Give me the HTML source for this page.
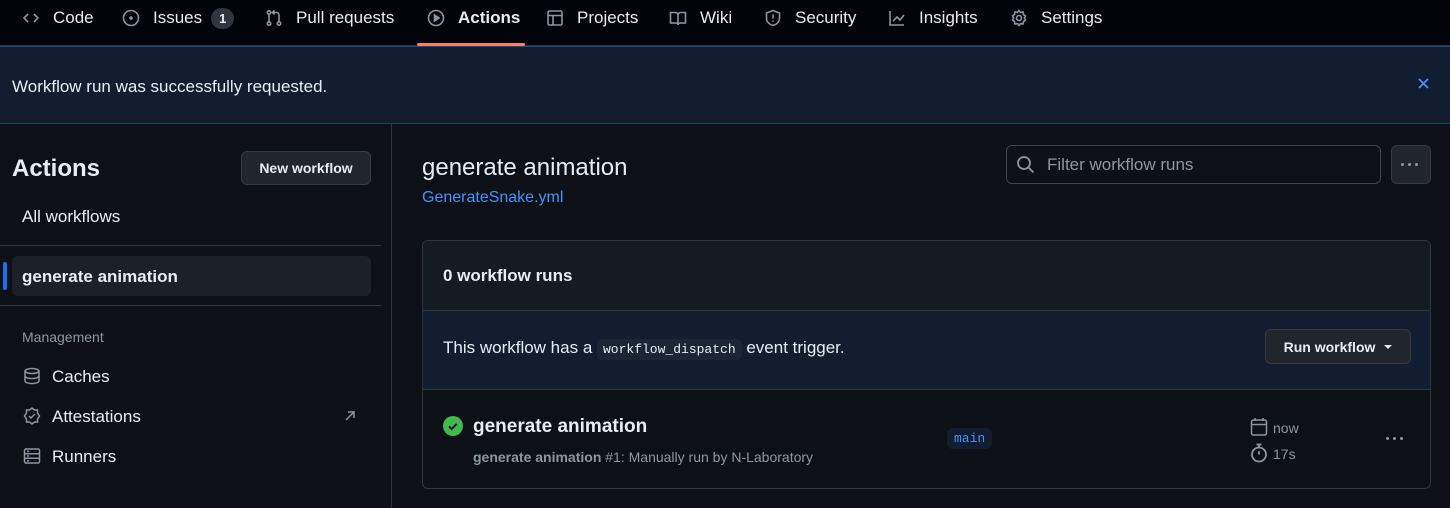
<!DOCTYPE html>
<html><head><meta charset="utf-8"><style>
*{box-sizing:border-box;margin:0;padding:0}
body{width:1450px;height:508px;overflow:hidden;background:#0d1117;color:#e6edf3;font-family:"Liberation Sans",sans-serif;font-size:14px;position:relative}
.nav{position:absolute;left:0;top:0;width:1450px;height:46px;background:#010409;border-bottom:1px solid #30363d}
.nav .it{position:absolute;top:0;height:36px;display:flex;align-items:center;font-size:17px;color:#e6edf3}
.nav svg{width:18px;height:18px;margin-right:13px;fill:none;stroke:#8d96a0;stroke-width:1.6}
.badge{display:inline-block;background:#30363d;border-radius:12px;font-size:13px;padding:3px 8px;margin-left:9px;font-weight:bold}
.flash{position:absolute;left:0;top:46px;width:1450px;height:78px;background:#121d2f;border-top:1px solid #1f4a80;border-bottom:1px solid #1f3a5f}
.side{position:absolute;left:0;top:124px;width:392px;height:384px;border-right:1px solid #30363d}
.btn{position:absolute;background:#21262d;border:1px solid #363b42;border-radius:6px;color:#e6edf3;font-weight:bold;font-size:14px;display:flex;align-items:center;justify-content:center}
.card{position:absolute;left:422px;top:240px;width:1009px;height:249px;border:1px solid #30363d;border-radius:6px;overflow:hidden}
.sicon{fill:none;stroke:#8d96a0;stroke-width:1.5;position:absolute}
.dots{position:absolute;display:flex;gap:4px}
.dots i{display:block;width:3px;height:3px;border-radius:50%;background:#8d96a0}
</style></head><body>
<div class="nav">
 <div class="it" style="left:22px"><svg viewBox="0 0 18 18"><path d="M6 5L2 9l4 4M12 5l4 4-4 4"/></svg>Code</div>
 <div class="it" style="left:122px"><svg viewBox="0 0 18 18"><circle cx="9" cy="9" r="7.5"/><circle cx="9" cy="9" r="1" fill="#8d96a0"/></svg>Issues<span class="badge">1</span></div>
 <div class="it" style="left:265px"><svg viewBox="0 0 18 18"><circle cx="4" cy="3.5" r="1.7"/><circle cx="4" cy="14.5" r="1.7"/><circle cx="14" cy="14.5" r="1.7"/><path d="M4 5.2v7.6M14 12.8V6c0-1.5-1-2.5-2.5-2.5H8M9.5 1.5l-2 2 2 2"/></svg>Pull requests</div>
 <div class="it" style="left:427px;font-weight:bold"><svg viewBox="0 0 18 18"><circle cx="9" cy="9" r="7.5"/><path d="M7.5 6v6l4.5-3z" fill="#8d96a0"/></svg>Actions</div>
 <div style="position:absolute;left:417px;top:43px;width:108px;height:3px;background:#f78166;border-radius:2px"></div>
 <div class="it" style="left:546px"><svg viewBox="0 0 18 18"><rect x="2" y="2" width="14" height="14" rx="1.5"/><path d="M2 6.5h14M7 6.5V16"/></svg>Projects</div>
 <div class="it" style="left:669px"><svg viewBox="0 0 18 18"><path d="M1.5 3.5h5c1.5 0 2.5 1 2.5 2.5v10c0-1-1-2-2.5-2h-5zM16.5 3.5h-5C10 3.5 9 4.5 9 6v10c0-1 1-2 2.5-2h5z"/></svg>Wiki</div>
 <div class="it" style="left:764px"><svg viewBox="0 0 18 18"><path d="M9 1.5l6.5 2.5v5c0 4-3 6.5-6.5 7.5-3.5-1-6.5-3.5-6.5-7.5V4z M9 5.5v4M9 11.5v1.2"/></svg>Security</div>
 <div class="it" style="left:888px"><svg viewBox="0 0 18 18"><path d="M2 2v14h14M5 12l4-4 3 3 4-5"/></svg>Insights</div>
 <div class="it" style="left:1010px"><svg viewBox="0 0 18 18"><circle cx="9" cy="9" r="2.5"/><path d="M9 1.5l1.5 2 2.5-.5.5 2.5 2 1.5-1.2 2 1.2 2-2 1.5-.5 2.5-2.5-.5L9 16.5l-1.5-2-2.5.5-.5-2.5-2-1.5 1.2-2-1.2-2 2-1.5.5-2.5 2.5.5z"/></svg>Settings</div>
</div>
<div class="flash">
 <div style="position:absolute;left:12px;top:30px;font-size:17px">Workflow run was successfully requested.</div>
 <svg style="position:absolute;left:1417px;top:30px" width="13" height="13" viewBox="0 0 13 13"><path d="M2 2l9 9M11 2l-9 9" stroke="#4493f8" stroke-width="1.8"/></svg>
</div>
<div class="side">
 <div style="position:absolute;left:12px;top:31px;font-size:24px;font-weight:bold">Actions</div>
 <div class="btn" style="left:241px;top:27px;width:130px;height:34px">New workflow</div>
 <div style="position:absolute;left:22px;top:83px;font-size:17px">All workflows</div>
 <div style="position:absolute;left:0;top:121px;width:381px;height:1px;background:#30363d"></div>
 <div style="position:absolute;left:12px;top:132px;width:359px;height:40px;background:#1c2128;border-radius:6px"></div>
 <div style="position:absolute;left:3px;top:138px;width:4px;height:28px;background:#1f6feb;border-radius:3px"></div>
 <div style="position:absolute;left:22px;top:143px;font-size:17px;font-weight:bold">generate animation</div>
 <div style="position:absolute;left:0;top:181px;width:381px;height:1px;background:#30363d"></div>
 <div style="position:absolute;left:22px;top:205px;font-size:14px;color:#8d96a0">Management</div>
 <svg class="sicon" style="left:23px;top:243px" width="18" height="18" viewBox="0 0 18 18"><ellipse cx="9" cy="4" rx="7" ry="2.5"/><path d="M2 4v10c0 1.4 3 2.5 7 2.5s7-1.1 7-2.5V4M2 9c0 1.4 3 2.5 7 2.5s7-1.1 7-2.5"/></svg>
 <div style="position:absolute;left:52px;top:243px;font-size:17px">Caches</div>
 <svg class="sicon" style="left:23px;top:283px" width="18" height="18" viewBox="0 0 18 18"><path d="M9 1l2.5 2h3v3L16.5 9l-2 3v3h-3L9 17l-2.5-2h-3v-3L1.5 9l2-3V3h3z M6 9l2 2 4-4"/></svg>
 <div style="position:absolute;left:52px;top:283px;font-size:17px">Attestations</div>
 <svg class="sicon" style="left:344px;top:286px" width="12" height="12" viewBox="0 0 12 12"><path d="M2 10l8-8M4 2h6v6"/></svg>
 <svg class="sicon" style="left:23px;top:323px" width="18" height="18" viewBox="0 0 18 18"><rect x="1.5" y="2" width="15" height="14" rx="1.5"/><path d="M1.5 6.7h15M1.5 11.3h15M4 4.4h2M4 9h2M4 13.7h2"/></svg>
 <div style="position:absolute;left:52px;top:323px;font-size:17px">Runners</div>
</div>
<div style="position:absolute;left:422px;top:154px;font-size:24px">generate animation</div>
<div style="position:absolute;left:422px;top:189px;font-size:16px;color:#4493f8">GenerateSnake.yml</div>
<div style="position:absolute;left:1006px;top:145px;width:375px;height:39px;border:1px solid #3d444d;border-radius:6px;background:#0d1117"></div>
<svg class="sicon" style="left:1016px;top:155px;stroke-width:1.8" width="20" height="20" viewBox="0 0 20 20"><circle cx="8" cy="8" r="6"/><path d="M12.5 12.5l5 5"/></svg>
<div style="position:absolute;left:1047px;top:155px;font-size:17px;color:#8d96a0">Filter workflow runs</div>
<div class="btn" style="left:1391px;top:145px;width:40px;height:39px"></div>
<div class="dots" style="left:1401px;top:163px"><i></i><i></i><i></i></div>
<div class="card">
 <div style="position:absolute;left:0;top:0;width:100%;height:70px;background:#151b23;border-bottom:1px solid #30363d"></div>
 <div style="position:absolute;left:20px;top:25px;font-size:17px;font-weight:bold">0 workflow runs</div>
 <div style="position:absolute;left:0;top:70px;width:100%;height:79px;background:#121d2f;border-bottom:1px solid #30363d"></div>
 <div style="position:absolute;left:20px;top:97px;font-size:17px">This workflow has a <span style="font-family:'Liberation Mono',monospace;font-size:13px;background:#1b2535;padding:3px 6px;border-radius:5px">workflow_dispatch</span> event trigger.</div>
 <div class="btn" style="left:842px;top:88px;width:146px;height:35px">Run workflow<span style="display:inline-block;margin-left:9px;border-left:4px solid transparent;border-right:4px solid transparent;border-top:4px solid #e6edf3"></span></div>
 <svg style="position:absolute;left:20px;top:175px" width="20" height="20" viewBox="0 0 20 20"><circle cx="10" cy="10" r="10" fill="#3fb950"/><path d="M6 10.3l2.7 2.7 5-5.2" fill="none" stroke="#0d1117" stroke-width="1.9"/></svg>
 <div style="position:absolute;left:50px;top:175px;font-size:19px;font-weight:bold">generate animation</div>
 <div style="position:absolute;left:50px;top:208px;font-size:14px;color:#8d96a0"><b>generate animation</b> #1: Manually run by N-Laboratory</div>
 <div style="position:absolute;left:524px;top:187px;background:#121d2f;border-radius:6px;font-family:'Liberation Mono',monospace;font-size:13px;color:#4493f8;padding:3px 7px">main</div>
 <svg class="sicon" style="left:827px;top:176px" width="18" height="20" viewBox="0 0 18 20"><rect x="1.5" y="3" width="15" height="15" rx="2"/><path d="M1.5 7.5h15M5 1v3M13 1v3"/></svg>
 <div style="position:absolute;left:850px;top:179px;font-size:14px;color:#8d96a0">now</div>
 <svg class="sicon" style="left:827px;top:202px;stroke-width:1.8" width="18" height="20" viewBox="0 0 18 20"><circle cx="9" cy="11.5" r="7"/><path d="M6.5 1.5h5M9 1.5v3M9 11.5V8"/></svg>
 <div style="position:absolute;left:850px;top:205px;font-size:14px;color:#8d96a0">17s</div>
 <div class="dots" style="left:963px;top:196px"><i></i><i></i><i></i></div>
</div>
</body></html>
